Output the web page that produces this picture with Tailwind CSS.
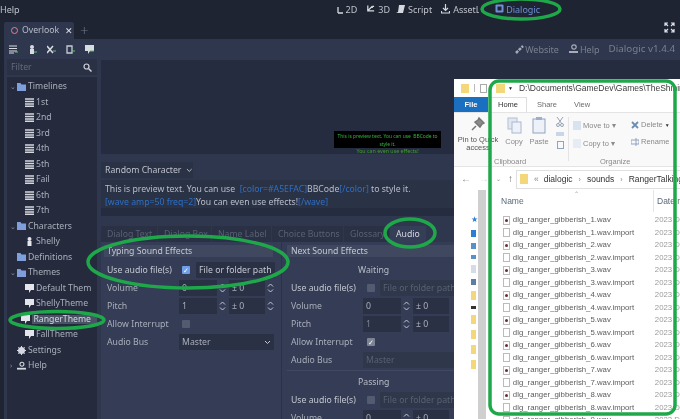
<!DOCTYPE html>
<html lang="en">
<head>
    <meta charset="UTF-8">
    <title>Dialogic audio theme</title>
    <script src="https://cdn.jsdelivr.net/npm/@tailwindcss/browser@4"></script>
</head>
<body class="m-0 bg-[#1f2432]">
    <div class="relative w-[680px] h-[419px] overflow-hidden bg-[#1f2432] font-['Noto_Sans',sans-serif] text-[8.700px] leading-none text-[#c4c8d2] blur-[0.3px]">

        <!-- top menu -->
        <div class="flex items-center h-[18px] text-[#bfc3cd]">
            <span class="text-[9px]">Help</span>
            <div class="flex items-center ml-[317px] gap-[9px] text-[9px]">
                <span class="flex items-center gap-[3px]"><svg width="6" height="10" viewBox="0 0 6 10"><path d="M1 9V3M1 9h5" stroke="#d5d8df" stroke-width="1.300" fill="none"/></svg>2D</span>
                <span class="flex items-center gap-[3px]"><svg width="9" height="10" viewBox="0 0 10 10"><path d="M2 1v6h7M2 7l5-5M7 2h2M7 2v2" stroke="#d5d8df" stroke-width="1.400" fill="none"/></svg>3D</span>
                <span class="flex items-center gap-[3px] -ml-[3px]"><svg width="9" height="10" viewBox="0 0 9 10"><path d="M3 1h6L7 9H0l2-1z" fill="#d5d8df"/></svg>Script</span>
                <span class="flex items-center gap-[3px] w-[38px] overflow-hidden whitespace-nowrap"><svg class="shrink-0" width="9" height="10" viewBox="0 0 9 10"><path d="M4.500 0v6M2 4l2.500 2.500L7 4M.5 7v2h8V7" stroke="#d5d8df" stroke-width="1.200" fill="none"/></svg>AssetLib</span>
                <span class="flex items-center gap-[2px] ml-[7px] text-[#6f8fd6]"><svg width="9" height="10" viewBox="0 0 9 10"><rect x=".5" y=".5" width="8" height="8" rx="1" fill="#6f8fd6"/><rect x="2.500" y="2.500" width="4" height="4" fill="#1f2432"/></svg>Dialogic</span>
            </div>
        </div>

        <!-- scene tabs -->
        <div class="relative flex items-center h-[21px] pl-[4px] pt-[4px]">
            <div class="flex items-center h-[17px] w-[70px] pl-[7px] bg-[#2e374d] rounded-t-[2px]">
                <span class="shrink-0 w-[7px] h-[7px] rounded-full border border-[#e8808c]"></span>
                <span class="ml-[4px] text-[#b9bdc9]">Overlook</span>
                <span class="ml-[6px] text-[#dfe2e8] text-[9px]">✕</span>
            </div>
            <span class="ml-[6px] text-[#6b7284] text-[15px] font-light">+</span>
            <svg class="absolute right-[5px] top-[4px]" width="11" height="11" viewBox="0 0 11 11"><path d="M1 4V1h3M7 1h3v3M10 7v3H7M4 10H1V7M1 1l3 3M10 1L7 4M10 10L7 7M1 10l3-3" stroke="#dfe2e8" stroke-width="1.200" fill="none"/></svg>
        </div>

        <!-- dialogic toolbar -->
        <div class="flex items-center h-[20px] ml-[4px] pl-[5px] pr-[5px] bg-[#2e374d]">
            <div class="flex items-center gap-[10px]">
                <svg width="9" height="9" viewBox="0 0 9 9"><path d="M0 1h8M0 3.500h8M0 6h8M0 8h5" stroke="#d8dbe2" stroke-width="1.200"/><path d="M6 7h3" stroke="#5fc46b"/></svg>
                <svg width="9" height="9" viewBox="0 0 9 9"><circle cx="4" cy="2" r="2" fill="#d8dbe2"/><path d="M2 4h4v5H2z" fill="#d8dbe2"/><path d="M6 7h3" stroke="#5fc46b"/></svg>
                <svg width="9" height="9" viewBox="0 0 9 9"><path d="M0 1l6 7M6 1L0 8" stroke="#d8dbe2" stroke-width="1.500"/><path d="M6 6h3" stroke="#5fc46b"/></svg>
                <svg width="9" height="9" viewBox="0 0 9 9"><path d="M1 1h5v7H1z" fill="none" stroke="#c8ccd4" stroke-width="1.300"/><path d="M6 6h3" stroke="#5fc46b"/></svg>
                <svg width="9" height="9" viewBox="0 0 9 9"><path d="M0 0h9v6H5L3 9V6H0z" fill="#d8dbe2"/><path d="M5 6h4" stroke="#5fc46b"/></svg>
            </div>
            <div class="flex items-center ml-auto text-[#78808f] text-[9px]">
                <span class="flex items-center gap-[1px]"><svg width="9" height="9" viewBox="0 0 9 9"><path d="M1 8l7-7" stroke="#a7acb8" stroke-width="2.500" stroke-dasharray="3 1"/></svg>Website</span>
                <span class="flex items-center gap-[1px] ml-[9px]"><svg width="11" height="10" viewBox="0 0 11 10"><circle cx="6" cy="3" r="2.200" fill="none" stroke="#a7acb8" stroke-width="1.200"/><path d="M1 8h9" stroke="#a7acb8" stroke-width="2"/></svg>Help</span>
                <span class="ml-[9px] text-[9.800px]">Dialogic v1.4.4</span>
            </div>
        </div>

        <div class="flex ml-[4px] h-[360px] bg-[#2e374d]">
            <!-- resource tree -->
            <div class="w-[93px] shrink-0 pl-[3px]">
                <div class="flex items-center justify-between h-[16px] pl-[4px] pr-[5px] bg-[#2a3144] text-[#646b7d]">
                    Filter
                    <svg width="9" height="9" viewBox="0 0 9 9"><circle cx="3.500" cy="3.500" r="2.500" fill="none" stroke="#cfd2da" stroke-width="1.200"/><path d="M5.500 5.500L8.500 8.500" stroke="#cfd2da" stroke-width="1.500"/></svg>
                </div>
                <div id="tree" class="mt-[2px] h-[342px] pt-[2px] bg-[#252b3d] text-[#a9aebb]"></div>
            </div>

            <!-- main column -->
            <div class="flex-1 min-w-0 pl-[4px]">
                <div class="relative h-[94px] mt-[1px] bg-[#262c3f]">
                    <div class="absolute left-[233px] top-[71px] w-[107px] text-center text-[5.300px] leading-[8px] text-[#35b53f]">
                        <div class="bg-black h-[17px] pt-[1px] text-[4.900px]">This is preview text. You can use &nbsp;BBCode to style it.</div>
                        <div class="-mt-[1px] text-[#3f9e30]">You can even use effects!</div>
                    </div>
                </div>
                <div class="flex items-center w-[92px] h-[16px] mt-[8px] pl-[4px] bg-[#2a3246] text-[#bfc3cd] whitespace-nowrap">
                    Random Character
                    <svg class="ml-[5px]" width="7" height="5" viewBox="0 0 7 5"><path d="M1 1l2.500 2.500L6 1" stroke="#c4c8d2" fill="none"/></svg>
                </div>
                <div class="h-[28px] mt-[2px] pl-[4px] pt-[3px] bg-[#2a3246] leading-[13px] text-[#b9bdc9] whitespace-nowrap">
                    <div>This is preview text. You can use &nbsp;<span class="text-[#2f6fc4]">[color=#A5EFAC]</span>BBCode<span class="text-[#2f6fc4]">[/color]</span> to style it.</div>
                    <div><span class="text-[#2f6fc4]">[wave amp=50 freq=2]</span>You can even use effects!<span class="text-[#2f6fc4]">[/wave]</span></div>
                </div>
                <div class="h-[8px] bg-[#262c3f]"></div>

                <!-- theme tabs -->
                <div class="flex items-center h-[16px] mt-[10px] text-[#596074] whitespace-nowrap">
                    <span class="h-full w-[56px] pl-[6px] pt-[4px] bg-[#2a3145]">Dialog Text</span>
                    <span class="h-full w-[53px] pl-[6px] pt-[4px] ml-[1px] bg-[#2a3145]">Dialog Box</span>
                    <span class="h-full w-[59px] pl-[6px] pt-[4px] ml-[1px] bg-[#2a3145]">Name Label</span>
                    <span class="h-full w-[71px] pl-[6px] pt-[4px] ml-[1px] bg-[#2a3145]">Choice Buttons</span>
                    <span class="h-full w-[45px] pl-[6px] pt-[4px] ml-[1px] bg-[#2a3145]">Glossary</span>
                    <span class="h-full pl-[6px] pr-[6px] pt-[4px] ml-[1px] bg-[#343e56] text-[#d5d8df]">Audio</span>
                </div>

                <div class="flex h-[178px] bg-[#343d55]">
                    <!-- typing sounds -->
                    <div class="w-[181px] pl-[3px] pr-[8px] pt-[3px] border-r border-[#2c3348]">
                        <div class="flex items-center h-[12px] pl-[3px] bg-[#3f485f] text-[#c4c8d2]">Typing Sound Effects</div>
                        <div class="grid grid-cols-[72px_1fr] auto-rows-[18px] items-center mt-[4px] pl-[3px] text-[#a9aebb]">
                            <span class="text-[#c4c8d2]">Use audio file(s)</span>
                            <div class="flex items-center">
                                <span class="flex items-center justify-center w-[8px] h-[8px] ml-[3px] rounded-[1px] bg-[#6f9fe8] text-white text-[7px]">✓</span>
                                <span class="flex items-center ml-[6px] h-[16px] w-[79px] pl-[3px] bg-[#2a3145] text-[#c4c8d2] whitespace-nowrap">File or folder path</span>
                            </div>
                            <span>Volume</span>
                            <div class="flex items-center">
                                <span class="flex items-center w-[38px] h-[16px] pl-[3px] bg-[#2a3145]">0</span>
                                <svg class="mx-[2px]" width="7" height="10" viewBox="0 0 7 10"><path d="M1 3.500l2.500-2.500L6 3.500M1 6.500L3.500 9 6 6.500" stroke="#c4c8d2" fill="none"/></svg>
                                <span class="flex items-center w-[36px] h-[16px] ml-[1px] pl-[3px] bg-[#2a3145]">± 0</span>
                                <svg class="mx-[2px]" width="7" height="10" viewBox="0 0 7 10"><path d="M1 3.500l2.500-2.500L6 3.500M1 6.500L3.500 9 6 6.500" stroke="#c4c8d2" fill="none"/></svg>
                            </div>
                            <span>Pitch</span>
                            <div class="flex items-center">
                                <span class="flex items-center w-[38px] h-[16px] pl-[3px] bg-[#2a3145]">1</span>
                                <svg class="mx-[2px]" width="7" height="10" viewBox="0 0 7 10"><path d="M1 3.500l2.500-2.500L6 3.500M1 6.500L3.500 9 6 6.500" stroke="#c4c8d2" fill="none"/></svg>
                                <span class="flex items-center w-[36px] h-[16px] ml-[1px] pl-[3px] bg-[#2a3145]">± 0</span>
                                <svg class="mx-[2px]" width="7" height="10" viewBox="0 0 7 10"><path d="M1 3.500l2.500-2.500L6 3.500M1 6.500L3.500 9 6 6.500" stroke="#c4c8d2" fill="none"/></svg>
                            </div>
                            <span>Allow Interrupt</span>
                            <span class="w-[8px] h-[8px] ml-[3px] rounded-[1px] bg-[#525b70]"></span>
                            <span>Audio Bus</span>
                            <div class="flex items-center justify-between w-[95px] h-[16px] px-[3px] bg-[#2a3145]">
                                Master
                                <svg width="7" height="5" viewBox="0 0 7 5"><path d="M1 1l2.500 2.500L6 1" stroke="#c4c8d2" fill="none"/></svg>
                            </div>
                        </div>
                    </div>

                    <!-- next sounds -->
                    <div class="flex-1 min-w-0 pl-[5px] pt-[3px] whitespace-nowrap">
                        <div class="flex items-center h-[12px] pl-[4px] bg-[#3f485f] text-[#c4c8d2]">Next Sound Effects</div>
                        <div class="grid grid-cols-[72px_1fr] auto-rows-[18px] items-center mt-[4px] pl-[4px] text-[#a9aebb]">
                            <span class="col-span-2 pl-[67px] text-[#b9bdc9]">Waiting</span>
                            <span class="text-[#c4c8d2]">Use audio file(s)</span>
                            <div class="flex items-center">
                                <span class="w-[8px] h-[8px] ml-[4px] rounded-[1px] bg-[#525b70]"></span>
                                <span class="flex items-center ml-[5px] h-[16px] w-[79px] pl-[3px] bg-[#2f374b] text-[#596074]">File or folder path</span>
                            </div>
                            <span>Volume</span>
                            <div class="flex items-center">
                                <span class="flex items-center w-[38px] h-[16px] pl-[3px] bg-[#2a3145]">0</span>
                                <svg class="mx-[2px]" width="7" height="10" viewBox="0 0 7 10"><path d="M1 3.500l2.500-2.500L6 3.500M1 6.500L3.500 9 6 6.500" stroke="#c4c8d2" fill="none"/></svg>
                                <span class="flex items-center w-[36px] h-[16px] ml-[1px] pl-[3px] bg-[#2a3145]">± 0</span>
                            </div>
                            <span>Pitch</span>
                            <div class="flex items-center">
                                <span class="flex items-center w-[38px] h-[16px] pl-[3px] bg-[#2a3145] text-[#7d8496]">1</span>
                                <svg class="mx-[2px]" width="7" height="10" viewBox="0 0 7 10"><path d="M1 3.500l2.500-2.500L6 3.500M1 6.500L3.500 9 6 6.500" stroke="#c4c8d2" fill="none"/></svg>
                                <span class="flex items-center w-[36px] h-[16px] ml-[1px] pl-[3px] bg-[#2a3145]">± 0</span>
                            </div>
                            <span>Allow Interrupt</span>
                            <span class="flex items-center justify-center w-[8px] h-[8px] ml-[4px] rounded-[1px] bg-[#7c8392] text-white text-[7px]">✓</span>
                            <span>Audio Bus</span>
                            <div class="flex items-center h-[16px] w-[110px] pl-[3px] bg-[#2f374b] text-[#596074]">Master</div>
                        </div>
                        <div class="h-[1px] mt-[1px] bg-[#404960]"></div>
                        <div class="grid grid-cols-[72px_1fr] auto-rows-[18px] items-center mt-[2px] pl-[4px] text-[#a9aebb]">
                            <span class="col-span-2 pl-[67px] text-[#b9bdc9]">Passing</span>
                            <span class="text-[#c4c8d2]">Use audio file(s)</span>
                            <div class="flex items-center">
                                <span class="w-[8px] h-[8px] ml-[4px] rounded-[1px] bg-[#525b70]"></span>
                                <span class="flex items-center ml-[5px] h-[16px] w-[79px] pl-[3px] bg-[#2f374b] text-[#596074]">File or folder path</span>
                            </div>
                            <span>Volume</span>
                            <div class="flex items-center">
                                <span class="flex items-center w-[38px] h-[16px] pl-[3px] bg-[#2a3145]">0</span>
                                <svg class="mx-[2px]" width="7" height="10" viewBox="0 0 7 10"><path d="M1 3.500l2.500-2.500L6 3.500M1 6.500L3.500 9 6 6.500" stroke="#c4c8d2" fill="none"/></svg>
                                <span class="flex items-center w-[36px] h-[16px] ml-[1px] pl-[3px] bg-[#2a3145]">± 0</span>
                            </div>
                        </div>
                    </div>
                </div>
            </div>
        </div>

        <!-- explorer window pasted over the editor -->
        <div class="absolute left-[454px] top-[79px] w-[226px] h-[340px] overflow-hidden bg-white font-['Liberation_Sans',sans-serif] text-[#6d6d6d] whitespace-nowrap">
            <div class="flex items-center h-[18px] pl-[7px] text-[8.500px] text-[#3b3b3b]">
                <span class="shrink-0 w-[8px] h-[9px] bg-[#f5d77b]"></span>
                <span class="shrink-0 w-[1px] h-[8px] ml-[5px] bg-[#bbb]"></span>
                <span class="shrink-0 w-[7px] h-[9px] ml-[5px] border border-[#aaa]"></span>
                <span class="shrink-0 w-[9px] h-[9px] ml-[9px] bg-[#f5d77b]"></span>
                <span class="shrink-0 ml-[3px] text-[#222] text-[5px]">▼</span>
                <span class="shrink-0 ml-[6px]">D:\Documents\GameDev\Games\TheShining\ga</span>
            </div>
            <div class="flex items-center h-[15px] text-[7.500px]">
                <span class="flex items-center justify-center w-[34px] h-full bg-[#1a6fc1] text-white font-bold">File</span>
                <span class="flex items-center h-full pl-[8px] pr-[8px] ml-[1px] border border-b-0 border-[#dedede] text-[#333]">Home</span>
                <span class="ml-[10px]">Share</span>
                <span class="ml-[17px]">View</span>
            </div>
            <div class="relative flex h-[55px] pt-[4px] border-t border-b border-[#e4e4e4] bg-[#f9f9f9] text-[7.500px] text-[#8a8a8a]">
                <div class="flex flex-col items-center w-[48px] shrink-0 text-[#555] leading-[8px]">
                    <svg width="14" height="14" viewBox="0 0 14 14"><path d="M8 1l5 5-2 1-2 3-5-5 3-2zM5 9l-4 4" stroke="#777" stroke-width="1.500" fill="#8a8a8a"/></svg>
                    <span class="mt-[5px]">Pin to Quick</span>
                    <span>access</span>
                </div>
                <div class="flex flex-col items-center w-[24px]">
                    <svg width="15" height="17" viewBox="0 0 15 17"><rect x="1" y="1" width="9" height="11" fill="#e2e8f2" stroke="#b4bfd2"/><rect x="5" y="5" width="9" height="11" fill="#eef2f8" stroke="#a9b8d0"/></svg>
                    <span class="mt-[4px]">Copy</span>
                </div>
                <div class="flex flex-col items-center w-[26px]">
                    <svg width="14" height="17" viewBox="0 0 14 17"><rect x="1" y="2" width="12" height="14" fill="#eef2f8" stroke="#8fa4c0"/><rect x="4" y="0" width="6" height="3" fill="#9db0c8"/></svg>
                    <span class="mt-[4px]">Paste</span>
                </div>
                <div class="flex flex-col items-center gap-[5px] ml-[2px] w-[12px]">
                    <svg width="8" height="10" viewBox="0 0 8 10"><path d="M1 0l5 7M7 0L2 7" stroke="#9aa5b4"/><circle cx="2" cy="8" r="1.500" fill="none" stroke="#9aa5b4"/><circle cx="6" cy="8" r="1.500" fill="none" stroke="#9aa5b4"/></svg>
                    <span class="w-[8px] h-[4px] bg-[#c9d6e8]"></span>
                    <span class="w-[7px] h-[8px] border border-[#8fa4c0]"></span>
                </div>
                <div class="w-[1px] h-[44px] ml-[2px] bg-[#e4e4e4]"></div>
                <div class="flex flex-col gap-[9px] ml-[4px] pt-[4px] w-[58px]">
                    <span class="flex items-center gap-[2px]"><span class="w-[8px] h-[9px] bg-[#d9e3ef]"></span>Move to ▾</span>
                    <span class="flex items-center gap-[2px]"><span class="w-[8px] h-[9px] bg-[#e6ecf4]"></span>Copy to ▾</span>
                </div>
                <div class="flex flex-col gap-[9px] pt-[4px]">
                    <span class="flex items-center gap-[2px]"><svg width="8" height="8" viewBox="0 0 8 8"><path d="M1 1l6 6M7 1L1 7" stroke="#6a8eb5" stroke-width="1.800"/></svg>Delete <span class="text-[#333] text-[5px]">▼</span></span>
                    <span class="flex items-center gap-[2px]"><svg width="8" height="8" viewBox="0 0 8 8"><path d="M0 2h8v4H0zM5 0v8" stroke="#8fa4c0" fill="none"/></svg>Rename</span>
                </div>
                <div class="absolute left-[40px] bottom-[1px]">Clipboard</div>
                <div class="absolute left-[146px] bottom-[1px]">Organize</div>
            </div>
            <div class="flex items-center h-[23px] pl-[7px] pt-[1px] text-[8.500px]">
                <span class="text-[#8a8a8a] text-[10px]">←</span>
                <span class="ml-[8px] text-[#ddd] text-[10px]">→</span>
                <span class="ml-[7px] text-[#888] text-[6px]">⌄</span>
                <span class="ml-[7px] text-[#666] text-[10px]">↑</span>
                <span class="flex items-center h-[19px] flex-1 ml-[3px] pl-[3px] border border-[#e0e0e0] text-[#333]">
                    <span class="shrink-0 w-[8px] h-[10px] bg-[#f5d77b]"></span>
                    <span class="ml-[6px] text-[#888]">«</span>
                    <span class="ml-[5px]">dialogic</span>
                    <span class="ml-[6px] text-[#888] text-[7px]">›</span>
                    <span class="ml-[6px]">sounds</span>
                    <span class="ml-[6px] text-[#888] text-[7px]">›</span>
                    <span class="ml-[6px]">RangerTalking</span>
                </span>
            </div>
            <div class="flex h-[240px]">
                <div class="w-[24px] shrink-0 pt-[26px] pl-[17px]">
                    <div class="flex flex-col gap-[6px] items-start">
                        <span class="text-[#2a7fd4] text-[8px]">★</span>
                        <span class="w-[5px] h-[7px] bg-[#2a7fd4]"></span>
                        <span class="w-[5px] h-[6px] bg-[#5a90c8]"></span>
                        <span class="w-[5px] h-[4px] bg-[#5a90c8]"></span>
                        <span class="w-[5px] h-[8px] bg-[#d5dce6]"></span>
                        <span class="w-[5px] h-[6px] bg-[#5a7ea8]"></span>
                        <span class="w-[5px] h-[9px] bg-[#f5d77b]"></span>
                        <span class="w-[5px] h-[3px] bg-[#333]"></span>
                        <span class="w-[5px] h-[9px] bg-[#f5d77b]"></span>
                        <span class="w-[5px] h-[9px] bg-[#f5d77b]"></span>
                        <span class="w-[5px] h-[9px] bg-[#f5d77b]"></span>
                        <span class="w-[5px] h-[9px] bg-[#f5d77b]"></span>
                    </div>
                </div>
                <div class="w-[8px] shrink-0 bg-[#cfcfcf]"></div>
                <div class="flex-1 min-w-0 overflow-hidden">
                    <div class="relative flex items-center h-[22px] pl-[15px] text-[8.500px] text-[#5a6a7a]">
                        <span class="absolute left-[88px] top-[1px] text-[6px] text-[#999]">⌃</span>
                        Name
                        <span class="absolute left-[167px] top-0 h-full pl-[3px] border-l border-[#e4e4e4] leading-[22px]">Date m</span>
                    </div>
                    <div id="files" class="pt-[2px] text-[7.800px] leading-[12.500px]"></div>
                </div>
            </div>
        </div>

        <!-- green marker annotations -->
        <svg class="absolute inset-0 pointer-events-none" width="680" height="419" viewBox="0 0 680 419">
            <g fill="none" stroke="#1fa84a" stroke-width="3.500">
                <ellipse cx="521" cy="9" rx="39" ry="10"/>
                <ellipse cx="410" cy="233" rx="25" ry="14"/>
                <ellipse cx="188" cy="262" rx="100" ry="26"/>
                <ellipse cx="57" cy="320" rx="47" ry="8.500"/>
                <rect x="490" y="81" width="185" height="333" rx="9"/>
            </g>
        </svg>
    </div>

    <script>
        const treeIcons = {
            folder: '<svg width="9" height="8" viewBox="0 0 9 8"><path d="M0 0h3.500l1 1.500H9V8H0z" fill="#7f9fdc"/></svg>',
            timeline: '<svg width="9" height="9" viewBox="0 0 9 9"><path d="M0 1h9M0 3.500h9M0 6h9M0 8.300h9" stroke="#d5d8df" stroke-width="1.400"/></svg>',
            char: '<svg width="9" height="9" viewBox="0 0 9 9"><circle cx="4.500" cy="2" r="2" fill="#e4e6eb"/><path d="M2.500 4h4v5h-4z" fill="#e4e6eb"/></svg>',
            theme: '<svg width="9" height="9" viewBox="0 0 9 9"><path d="M0 0h9v6H6L4 9V6H0z" fill="#e4e6eb"/></svg>',
            gear: '<svg width="9" height="9" viewBox="0 0 9 9"><circle cx="4.500" cy="4.500" r="2.500" fill="none" stroke="#d5d8df" stroke-width="2"/><path d="M4.500 0v9M0 4.500h9M1.300 1.300l6.400 6.400M7.700 1.300L1.300 7.700" stroke="#d5d8df"/></svg>',
            help: '<svg width="10" height="10" viewBox="0 0 10 10"><circle cx="5.500" cy="3" r="2.200" fill="none" stroke="#d5d8df" stroke-width="1.200"/><path d="M0 8h10" stroke="#d5d8df" stroke-width="2"/></svg>'
        };
        // [label, icon, depth, arrow]
        const treeRows = [
            ['Timelines', 'folder', 0, '⌄'], ['1st', 'timeline', 1], ['2nd', 'timeline', 1], ['3rd', 'timeline', 1],
            ['4th', 'timeline', 1], ['5th', 'timeline', 1], ['Fail', 'timeline', 1], ['6th', 'timeline', 1], ['7th', 'timeline', 1],
            ['Characters', 'folder', 0, '⌄'], ['Shelly', 'char', 1], ['Definitions', 'folder', 0],
            ['Themes', 'folder', 0, '⌄'], ['Default Them', 'theme', 1], ['ShellyTheme', 'theme', 1], ['RangerTheme', 'theme', 1],
            ['FallTheme', 'theme', 1], ['Settings', 'gear', 0], ['Help', 'help', 0, '›']
        ];
        document.querySelector('#tree').innerHTML = treeRows.map(([label, icon, depth, arrow]) => `
            <div class="flex items-center h-[15.500px] whitespace-nowrap ${depth ? 'pl-[11px]' : 'pl-[3px]'}">
                <span class="w-[6px] text-[7px] text-[#8a90a0]">${arrow || ''}</span>
                <span class="flex items-center justify-center w-[9px] ml-[1px]">${treeIcons[icon]}</span>
                <span class="ml-[2px] ${label === 'RangerTheme' ? 'bg-[#4a5266] text-[#d5d8df] pl-[1px] pr-[6px]' : ''}">${label}</span>
            </div>
        `).join('');

        let files = '';
        for (let i = 1; i <= 8; i++) {
            files += `<div class="flex items-center h-[12.500px] pl-[17px] text-[#5c5c5c]"><span class="flex items-center justify-center w-[7px] h-[9px] border border-[#bbb]"><span class="w-[3px] h-[3px] rounded-full bg-[#6b2b2b]"></span></span><span class="ml-[3px] w-[146px]">dlg_ranger_gibberish_${i}.wav</span><span class="text-[#9a9a9a]">2023 D</span></div>`;
            files += `<div class="flex items-center h-[12.500px] pl-[17px] text-[#5c5c5c]"><span class="w-[7px] h-[9px] border border-[#bbb]"></span><span class="ml-[3px] w-[146px]">dlg_ranger_gibberish_${i}.wav.import</span><span class="text-[#9a9a9a]">2023 D</span></div>`;
        }
        files += `<div class="flex items-center h-[12.500px] pl-[17px] text-[#5c5c5c]"><span class="flex items-center justify-center w-[7px] h-[9px] border border-[#bbb]"><span class="w-[3px] h-[3px] rounded-full bg-[#6b2b2b]"></span></span><span class="ml-[3px] w-[146px]">dlg_ranger_gibberish_9.wav</span><span class="text-[#9a9a9a]">2023 D</span></div>`;
        document.querySelector('#files').innerHTML = files;
    </script>
</body>
</html>
